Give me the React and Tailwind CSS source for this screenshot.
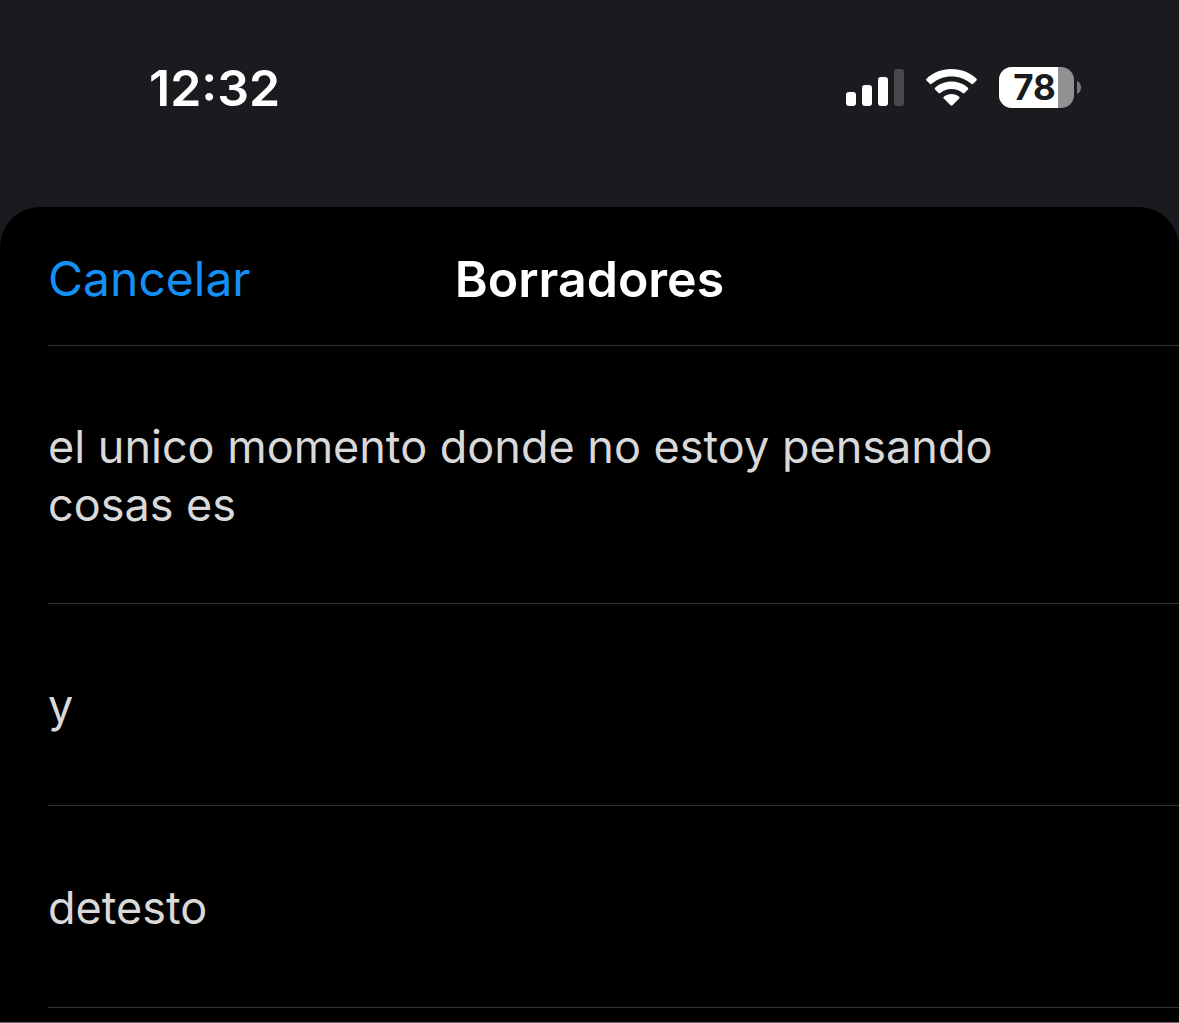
import React from "react";

const drafts = [
    "el unico momento donde no estoy pensando cosas es",
    "y",
    "detesto",
];

const SignalIcon = () => (
    <svg className="w-[58px] h-[37px]" viewBox="0 0 58 37" fill="white" aria-hidden="true">
        <rect x="0" y="23" width="10" height="14" rx="3" />
        <rect x="16" y="16" width="10" height="21" rx="3" />
        <rect x="32" y="8" width="10" height="29" rx="3" />
        <rect x="48" y="0" width="10" height="37" rx="3" fill="#48494b" />
    </svg>
);

const WifiIcon = () => (
    <svg className="w-[51px] h-[37px]" viewBox="0 0 51 37" fill="white" aria-hidden="true">
        <path d="M25.5 0C35.400 0 44.200 3.700 50.500 9.700Q51.300 10.600 50.500 11.500L47.200 14.800Q46.300 15.700 45.300 14.800C40 10.100 33.100 7.500 25.500 7.500S11 10.100 5.700 14.800Q4.700 15.700 3.800 14.800L.5 11.500Q-.3 10.600.5 9.700C6.800 3.700 15.600 0 25.500 0Z" />
        <path d="M25.500 12.500C31.800 12.500 37.500 14.800 41.900 18.700Q42.800 19.600 41.900 20.500L38.500 23.900Q37.600 24.700 36.600 23.900C33.600 21.300 29.700 20 25.500 20S17.400 21.300 14.400 23.900Q13.400 24.700 12.500 23.900L9.100 20.500Q8.200 19.600 9.100 18.700C13.500 14.800 19.200 12.500 25.500 12.500Z" />
        <path d="M25.500 25C28.300 25 31 26 33.100 27.700Q34.100 28.600 33.200 29.500L26.500 36.300Q25.500 37.200 24.500 36.300L17.800 29.500Q16.900 28.600 17.900 27.700C20 26 22.700 25 25.500 25Z" />
    </svg>
);

const Battery = ({ level }) => (
    <div className="flex items-center gap-[3px]">
        <div className="relative w-[75px] h-[41px] rounded-[13px] overflow-hidden bg-[#909192]">
            <div className="h-full bg-white" style={{ width: `${level}%` }} />
            <span className="absolute inset-0 pr-1 flex items-center justify-center text-[35px] font-bold text-[#1a1b1f]">
                {level}
            </span>
        </div>
        <svg className="w-1 h-[13px]" viewBox="0 0 4 13" fill="#78797b" aria-hidden="true">
            <path d="M0 0C2.400 1 4 3.500 4 6.500S2.400 12 0 13Z" />
        </svg>
    </div>
);

const App = () => {
    return (
        <div className="min-h-screen flex flex-col bg-[#1a1b1f] font-['Inter',sans-serif]">
            {/* Status bar */}
            <div className="h-[207px] pt-[60px] pl-[149px] pr-[98px] flex items-start justify-between">
                <span className="text-[50px] leading-14 font-semibold text-white">12:32</span>
                <div className="flex items-center gap-[22px] pt-[7px]">
                    <SignalIcon />
                    <WifiIcon />
                    <Battery level={78} />
                </div>
            </div>

            {/* Drafts sheet */}
            <main className="flex-1 bg-black rounded-t-[40px] pl-12 border-b border-[#6b6b6b]">
                <header className="h-[139px] pr-12 pt-[6px] grid grid-cols-[1fr_auto_1fr] items-center border-b border-[#333333]">
                    <button type="button" className="justify-self-start text-5xl leading-[58px] text-[#148ff5]">
                        Cancelar
                    </button>
                    <h1 className="text-[50px] leading-[58px] font-semibold text-white">Borradores</h1>
                </header>

                <ul>
                    {drafts.map((draft) => (
                        <li
                            key={draft}
                            className="min-h-[202px] pt-[72px] pb-[69px] pr-12 flex items-center border-b border-[#333333]"
                        >
                            <p className="max-w-[1020px] text-[45px] leading-[58px] text-[#d9d9d9]">{draft}</p>
                        </li>
                    ))}
                </ul>
            </main>
        </div>
    );
};

export default App;
